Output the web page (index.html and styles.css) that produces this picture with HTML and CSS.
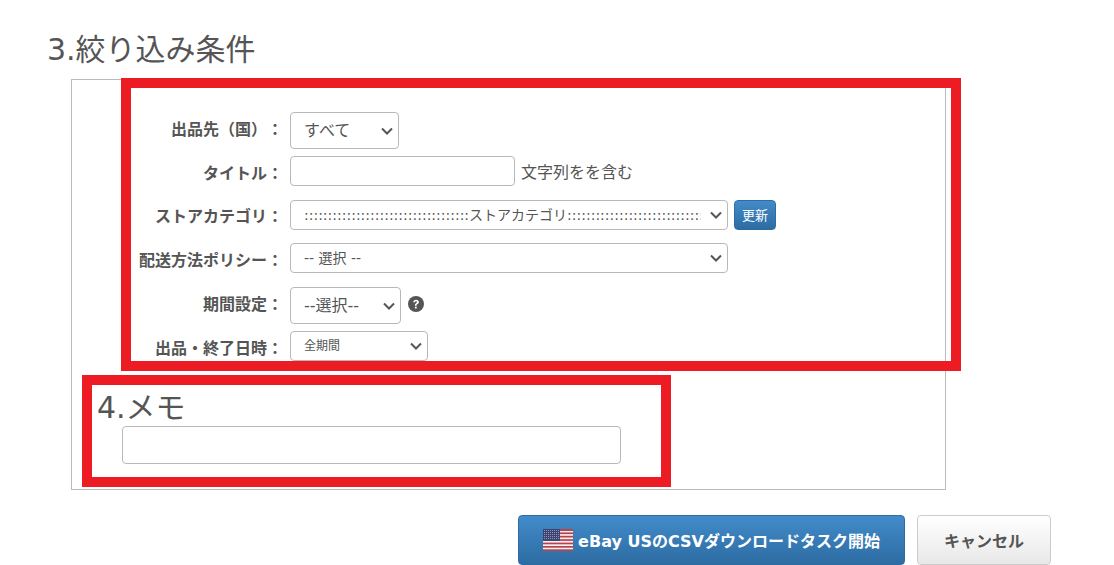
FILE: index.html
```html
<!DOCTYPE html>
<html lang="ja">
<head>
  <meta charset="UTF-8" />
  <title>CSVダウンロード</title>
  <link rel="stylesheet" href="styles.css">
</head>
<body>
  <main class="page">
    <h3 class="step-title">3.絞り込み条件</h3>

    <div class="filter-box">
      <span class="mark mark-filter"></span>
      <span class="mark mark-memo"></span>

      <form class="filter-form">
        <div class="row row-first">
          <label>出品先（国）：</label>
          <select class="ctl ctl-large w-country"><option>すべて</option></select>
        </div>
        <div class="row row-title">
          <label>タイトル：</label>
          <input class="ctl w-title" type="text">
          <span class="hint">文字列をを含む</span>
        </div>
        <div class="row row-store">
          <label>ストアカテゴリ：</label>
          <select class="ctl w-wide"><option>:::::::::::::::::::::::::::::::::::ストアカテゴリ:::::::::::::::::::::::::::::::::::</option></select>
          <button class="btn-update" type="button">更新</button>
        </div>
        <div class="row row-ship">
          <label>配送方法ポリシー：</label>
          <select class="ctl w-wide"><option>-- 選択 --</option></select>
        </div>
        <div class="row row-period">
          <label>期間設定：</label>
          <select class="ctl ctl-large w-period"><option>--選択--</option></select>
          <svg class="help" viewBox="0 0 16 16" width="16" height="16">
            <circle cx="8" cy="8" r="8" fill="#555"/>
            <path d="M5.200 6.200C5.300 4.600 6.500 3.700 8.100 3.700c1.600 0 2.800 1 2.800 2.300 0 1.100-.6 1.600-1.400 2.100-.6.4-.9.7-.9 1.300v.3H6.900v-.5c0-1 .5-1.500 1.200-2 .6-.4.9-.7.9-1.100 0-.5-.4-.8-1-.8-.6 0-1 .4-1.100 1z" fill="#fff"/>
            <rect x="6.900" y="10.700" width="1.800" height="1.800" fill="#fff"/>
          </svg>
        </div>
        <div class="row row-date">
          <label>出品・終了日時：</label>
          <select class="ctl ctl-small w-date"><option>全期間</option></select>
        </div>
      </form>

      <h3 class="memo-title">4.メモ</h3>
      <input class="ctl memo-input" type="text">
    </div>

    <div class="actions">
      <button class="btn-start" type="button">
        <svg class="flag" viewBox="0 0 30 22" width="30" height="22">
          <rect width="30" height="22" fill="#f4eeee"/>
          <g fill="#b8434f">
            <rect width="30" height="2"/>
            <rect y="3.400" width="30" height="1.700"/>
            <rect y="6.800" width="30" height="1.700"/>
            <rect y="10.200" width="30" height="1.700"/>
            <rect y="13.600" width="30" height="1.700"/>
            <rect y="17" width="30" height="1.700"/>
            <rect y="20.300" width="30" height="1.700"/>
          </g>
          <rect width="17" height="11.900" fill="#3c4373"/>
          <path d="M1 1.500h15M1 3.500h15M1 5.500h15M1 7.500h15M1 9.500h15" stroke="#a9adc8" stroke-width=".8" stroke-dasharray="1 1"/>
        </svg>
        eBay USのCSVダウンロードタスク開始
      </button>
      <button class="btn-cancel" type="button">キャンセル</button>
    </div>
  </main>
</body>
</html>
```

FILE: styles.css
```css
body {
  margin: 0;
  background-color: #fff;
  color: #555;
  font-family: "DejaVu Sans", "Noto Sans CJK JP", sans-serif;
  font-size: 16px;
}

.page {
  height: 565px;
  overflow: hidden;
}

.step-title {
  margin: 0;
  padding: 30px 0 0 47px;
  height: 79px;
  box-sizing: border-box;
  font-size: 30px;
  line-height: 40px;
  font-weight: normal;
  white-space: nowrap;
}

.filter-box {
  position: relative;
  box-sizing: border-box;
  width: 875px;
  height: 411px;
  margin-left: 71px;
  border: 1px solid #bbb;
}

/* red annotation frames drawn over the form */
.mark {
  position: absolute;
  box-sizing: border-box;
  border: 10px solid #ed1c24;
}

.mark-filter {
  left: 49px;
  top: -2px;
  width: 840px;
  height: 293px;
}

.mark-memo {
  left: 10px;
  top: 295px;
  width: 589px;
  height: 112px;
}

.filter-form {
  padding-top: 32px;
}

.row {
  display: flex;
  align-items: center;
}

.row label {
  width: 211px;
  text-align: right;
  font-weight: bold;
  white-space: nowrap;
  text-spacing-trim: space-all;
  flex: none;
}

.row-first label,
.row-period label {
  margin-bottom: 5px;
}

.row-title label,
.row-ship label,
.row-date label {
  margin-top: 2px;
}

.row-title,
.row-date {
  margin-top: 7px;
}

.row-store,
.row-period {
  margin-top: 14px;
}

.row-ship {
  margin-top: 13px;
}

.ctl {
  box-sizing: border-box;
  height: 30px;
  margin: 0 0 0 7px;
  padding: 0 26px 0 13px;
  border: 1px solid #b8b8b8;
  border-radius: 4px;
  background-color: #fff;
  color: #555;
  font-family: "DejaVu Sans", "Noto Sans CJK JP", sans-serif;
  font-size: 14px;
  flex: none;
}

select.ctl {
  appearance: none;
  background-image: url("data:image/svg+xml,%3Csvg xmlns='http://www.w3.org/2000/svg' width='12' height='8'%3E%3Cpath d='M1 1.500l5 5 5-5' fill='none' stroke='%23555' stroke-width='2'/%3E%3C/svg%3E");
  background-repeat: no-repeat;
  background-position: right 5px center;
}

.ctl-large {
  height: 37px;
  font-size: 16px;
}

.ctl-small {
  font-size: 12px;
}

.w-country { width: 109px; }
.w-title { width: 225px; }
.w-wide { width: 438px; }
.w-period { width: 111px; }
.w-date { width: 138px; }

.hint {
  margin-left: 6px;
  white-space: nowrap;
}

.btn-update {
  box-sizing: border-box;
  width: 42px;
  height: 30px;
  margin: -1px 0 0 6px;
  padding: 0;
  border: 1px solid #2e6da4;
  border-radius: 4px;
  background: linear-gradient(#428bca, #2d6ca2);
  color: #fff;
  font-family: "Noto Sans CJK JP", sans-serif;
  font-size: 13px;
}

.help {
  margin: -3px 0 0 7px;
  flex: none;
}

.memo-title {
  margin: 27px 0 0 25px;
  font-size: 30px;
  line-height: 40px;
  font-weight: normal;
}

.memo-input {
  display: block;
  width: 499px;
  height: 38px;
  margin: -2px 0 0 50px;
}

.actions {
  display: flex;
  justify-content: flex-end;
  gap: 12px;
  width: 1051px;
  margin-top: 25px;
}

.btn-start,
.btn-cancel {
  box-sizing: border-box;
  height: 50px;
  padding: 0;
  border-radius: 4px;
  font-family: "DejaVu Sans", "Noto Sans CJK JP", sans-serif;
  font-size: 16px;
  font-weight: bold;
  white-space: nowrap;
}

.btn-start {
  display: flex;
  align-items: center;
  justify-content: center;
  gap: 5px;
  width: 387px;
  border: 1px solid #2e6da4;
  background: linear-gradient(#428bca, #2d6ca2);
  color: #fff;
}

.flag {
  flex: none;
}

.btn-cancel {
  width: 134px;
  border: 1px solid #ccc;
  background: linear-gradient(#fff, #e8e8e8);
  color: #555;
}
```
